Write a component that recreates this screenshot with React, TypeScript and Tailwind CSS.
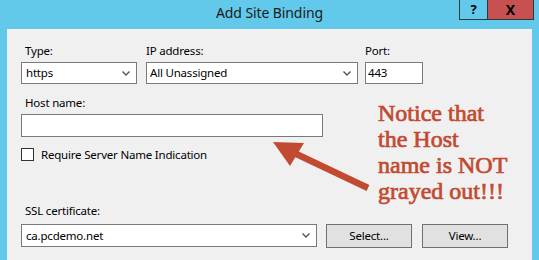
import React from "react";

const font = { fontFamily: '"Noto Sans", "Segoe UI", sans-serif' };

function Chevron() {
  return (
    <svg width="8" height="5" viewBox="0 0 8 5" className="shrink-0">
      <path d="M0.5 0.5 L4 4 L7.5 0.5" fill="none" stroke="#555" strokeWidth="1.4" />
    </svg>
  );
}

function SelectBox({ value, className }: { value: string; className: string }) {
  return (
    <div
      className={`flex items-center justify-between border border-[#7a7a7a] bg-white pl-[3px] pr-[6px] text-black ${className}`}
    >
      <span>{value}</span>
      <Chevron />
    </div>
  );
}

export default function App() {
  return (
    <div
      className="relative flex h-[260px] w-[539px] flex-col overflow-hidden bg-[#63c9ea]"
      style={font}
    >
      {/* title bar */}
      <div className="relative flex h-[29px] shrink-0 items-start">
        <div className="absolute left-0 right-0 top-[3px] text-center text-[14px] leading-[20px] tracking-[-0.1px] text-[#1a1a1a]">
          Add Site Binding
        </div>
        <div className="absolute left-[459px] top-[-1px] flex h-[21px]">
          <div className="flex w-[29px] items-center justify-center border border-[#2c3a40] bg-[#63c9ea] text-[13px] font-bold leading-none text-black">
            ?
          </div>
          <div className="flex w-[46px] items-center justify-center border border-l-0 border-[#2c3a40] bg-[#c75050] text-[14px] font-bold leading-none text-black">
            X
          </div>
        </div>
      </div>

      {/* panel */}
      <div className="ml-[7px] flex w-[525px] flex-1 flex-col bg-[#f0f0f0] pl-[14px] pt-[14px] text-[11.5px] tracking-[-0.2px] text-black">
        <div className="flex gap-0">
          <div className="flex w-[116px] flex-col">
            <div className="h-[16px] pl-[4px] leading-[16px]">Type:</div>
            <SelectBox value="https" className="mt-[3px] h-[22px] pl-[4px]" />
          </div>
          <div className="ml-[9px] flex w-[212px] flex-col">
            <div className="h-[16px] leading-[16px]">IP address:</div>
            <SelectBox value="All Unassigned" className="mt-[3px] h-[22px]" />
          </div>
          <div className="ml-[7px] flex w-[58px] flex-col">
            <div className="h-[16px] leading-[16px]">Port:</div>
            <div className="mt-[3px] flex h-[22px] items-center border border-[#7a7a7a] bg-white pl-[2px]">
              443
            </div>
          </div>
        </div>

        <div className="mt-[11px] h-[16px] pl-[4px] leading-[16px]">Host name:</div>
        <div className="mt-[3px] h-[23px] w-[302px] border border-[#7a7a7a] bg-white" />

        <div className="mt-[11px] flex h-[13px] items-center">
          <div className="h-[13px] w-[13px] border border-[#333] bg-white" />
          <span className="ml-[7px] leading-[13px]">Require Server Name Indication</span>
        </div>

        <div className="mt-[42px] h-[16px] pl-[4px] leading-[16px]">SSL certificate:</div>
        <div className="mt-[5px] flex">
          <SelectBox value="ca.pcdemo.net" className="h-[23px] w-[296px] pl-[4px]" />
          <button className="ml-[9px] flex h-[24px] w-[86px] items-center justify-center border border-[#707070] bg-[#e1e1e1]">
            Select...
          </button>
          <button className="ml-[10px] flex h-[24px] w-[86px] items-center justify-center border border-[#707070] bg-[#e1e1e1]">
            View...
          </button>
        </div>
      </div>

      {/* annotation */}
      <svg className="pointer-events-none absolute left-0 top-0" width="539" height="260">
        <line x1="368" y1="188" x2="290" y2="151" stroke="#c24a30" strokeWidth="6.5" />
        <polygon points="273,142 304,143 290,166" fill="#c24a30" />
      </svg>
      <div
        className="pointer-events-none absolute left-[378px] top-[100px] text-[24px] leading-[26px] text-[#c24a30]"
        style={{
          fontFamily: '"Liberation Serif", "Times New Roman", serif',
          WebkitTextStroke: "0.7px #c24a30",
        }}
      >
        <div>Notice that</div>
        <div>the Host</div>
        <div>name is NOT</div>
        <div>grayed out!!!</div>
      </div>
    </div>
  );
}
